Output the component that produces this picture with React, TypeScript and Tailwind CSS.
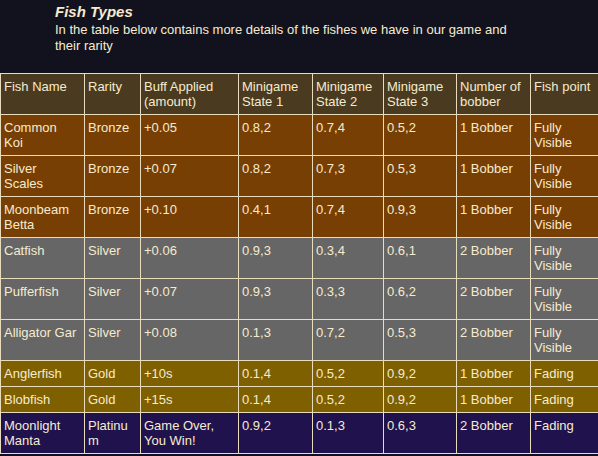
type Tier = 'bronze' | 'silver' | 'gold' | 'platinum';

interface FishRow {
  name: string;
  rarity: string;
  buff: string;
  s1: string;
  s2: string;
  s3: string;
  bobber: string;
  point: string;
  tier: Tier;
}

// names keep the line breaks the wider web font gave in the original
const fishes: FishRow[] = [
  { name: 'Common\nKoi', rarity: 'Bronze', buff: '+0.05', s1: '0.8,2', s2: '0.7,4', s3: '0.5,2', bobber: '1 Bobber', point: 'Fully Visible', tier: 'bronze' },
  { name: 'Silver\nScales', rarity: 'Bronze', buff: '+0.07', s1: '0.8,2', s2: '0.7,3', s3: '0.5,3', bobber: '1 Bobber', point: 'Fully Visible', tier: 'bronze' },
  { name: 'Moonbeam\nBetta', rarity: 'Bronze', buff: '+0.10', s1: '0.4,1', s2: '0.7,4', s3: '0.9,3', bobber: '1 Bobber', point: 'Fully Visible', tier: 'bronze' },
  { name: 'Catfish', rarity: 'Silver', buff: '+0.06', s1: '0.9,3', s2: '0.3,4', s3: '0.6,1', bobber: '2 Bobber', point: 'Fully Visible', tier: 'silver' },
  { name: 'Pufferfish', rarity: 'Silver', buff: '+0.07', s1: '0.9,3', s2: '0.3,3', s3: '0.6,2', bobber: '2 Bobber', point: 'Fully Visible', tier: 'silver' },
  { name: 'Alligator Gar', rarity: 'Silver', buff: '+0.08', s1: '0.1,3', s2: '0.7,2', s3: '0.5,3', bobber: '2 Bobber', point: 'Fully Visible', tier: 'silver' },
  { name: 'Anglerfish', rarity: 'Gold', buff: '+10s', s1: '0.1,4', s2: '0.5,2', s3: '0.9,2', bobber: '1 Bobber', point: 'Fading', tier: 'gold' },
  { name: 'Blobfish', rarity: 'Gold', buff: '+15s', s1: '0.1,4', s2: '0.5,2', s3: '0.9,2', bobber: '1 Bobber', point: 'Fading', tier: 'gold' },
  { name: 'Moonlight\nManta', rarity: 'Platinum', buff: 'Game Over, You Win!', s1: '0.9,2', s2: '0.1,3', s3: '0.6,3', bobber: '2 Bobber', point: 'Fading', tier: 'platinum' },
];

const tierBg: Record<Tier, string> = {
  bronze: 'bg-[#783f04]',
  silver: 'bg-[#666666]',
  gold: 'bg-[#7f6000]',
  platinum: 'bg-[#20124d]',
};

const headers = [
  'Fish Name',
  'Rarity',
  'Buff Applied (amount)',
  'Minigame State 1',
  'Minigame State 2',
  'Minigame State 3',
  'Number of bobber',
  'Fish point',
];

const cell = 'border border-[#e8dcbc] px-[3px] pt-[5px] pb-[5px] align-top text-left font-normal break-words';

const App = () => {
  return (
    <div
      className="bg-[#12121f] w-[598px] h-[456px] overflow-hidden text-[#f6ebcf]"
      style={{ fontFamily: '"Liberation Sans", Arial, sans-serif' }}
    >
      {/* Intro */}
      <div className="pl-[55px] pt-[2px] h-[73px]">
        <h2 className="text-[15px] leading-[19px] font-bold italic">Fish Types</h2>
        <p className="mt-[1px] text-[13px] leading-[16px] w-[480px]">
          In the table below contains more details of the fishes we have in our game and their rarity
        </p>
      </div>

      {/* Table */}
      <table className="w-[598px] table-fixed border-collapse text-[13px] leading-[15px]">
        <colgroup>
          <col className="w-[84px]" />
          <col className="w-[56px]" />
          <col className="w-[98px]" />
          <col className="w-[74px]" />
          <col className="w-[71px]" />
          <col className="w-[73px]" />
          <col className="w-[74px]" />
          <col className="w-[68px]" />
        </colgroup>
        <thead>
          <tr className="bg-[#4a3a1f] h-[40px]">
            {headers.map((h) => (
              <th key={h} className={cell}>
                {h}
              </th>
            ))}
          </tr>
        </thead>
        <tbody>
          {fishes.map((f) => (
            <tr key={f.name} className={tierBg[f.tier]}>
              <td className={`${cell} whitespace-pre-line`}>{f.name}</td>
              <td className={cell}>{f.rarity}</td>
              <td className={cell}>{f.buff}</td>
              <td className={cell}>{f.s1}</td>
              <td className={cell}>{f.s2}</td>
              <td className={cell}>{f.s3}</td>
              <td className={cell}>{f.bobber}</td>
              <td className={cell}>{f.point}</td>
            </tr>
          ))}
        </tbody>
      </table>
    </div>
  );
};

export default App;
